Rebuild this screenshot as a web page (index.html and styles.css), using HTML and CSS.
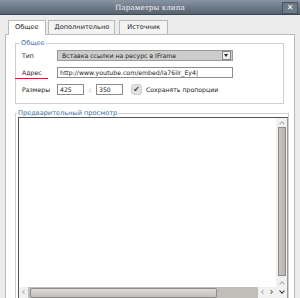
FILE: index.html
```html
<!DOCTYPE html>
<html lang="ru">
<head>
    <meta charset="UTF-8">
    <title>Параметры клипа</title>
    <link rel="stylesheet" href="styles.css">
</head>
<body>
    <div class="dialog">
        <div class="titlebar">
            <span class="title">Параметры клипа</span>
            <span class="close">&#10005;</span>
        </div>
        <div class="tabs">
            <div class="tab active">Общее</div>
            <div class="tab">Дополнительно</div>
            <div class="tab">Источник</div>
        </div>
        <div class="panel">
            <fieldset class="group">
                <legend>Общее</legend>
                <div class="row">
                    <label>Тип</label>
                    <div class="select">
                        <span>Вставка ссылки на ресурс в IFrame</span>
                        <span class="arrow"></span>
                    </div>
                </div>
                <div class="row">
                    <label><span class="marked">Адрес</span></label>
                    <div class="input wide">http://www.youtube.com/embed/la76iIr_Ey4|</div>
                </div>
                <div class="row">
                    <label>Размеры</label>
                    <div class="input small">425</div>
                    <span class="sep">:</span>
                    <div class="input small">350</div>
                    <span class="check">&#10004;</span>
                    <span class="keep">Сохранять пропорции</span>
                </div>
            </fieldset>
            <fieldset class="group preview">
                <legend>Предварительный просмотр</legend>
                <div class="frame">
                    <div class="view"></div>
                    <div class="vscroll">
                        <span class="btn up"></span>
                        <span class="vthumb"></span>
                        <span class="btn up"></span>
                        <span class="btn down"></span>
                    </div>
                    <div class="hscroll">
                        <span class="btn">&lsaquo;</span>
                        <span class="hthumb"></span>
                        <span class="btn">&lsaquo;</span>
                        <span class="btn">&rsaquo;</span>
                    </div>
                </div>
            </fieldset>
        </div>
    </div>
</body>
</html>
```

FILE: styles.css
```css
body {
    margin: 0;
    font-family: "DejaVu Sans", sans-serif;
    font-size: 6.2px;
    color: #222;
    background: #e4e4e4;
}
.dialog {
    width: 300px;
    height: 298px;
    overflow: hidden;
    background: #ececec;
    display: flex;
    flex-direction: column;
}
.titlebar {
    height: 14px;
    flex: none;
    background: linear-gradient(#8794a3, #56626f);
    border-bottom: 1px solid #3e4752;
    display: flex;
    align-items: center;
    justify-content: center;
    position: relative;
}
.title {
    font-family: "DejaVu Serif", serif;
    font-size: 7.3px;
    color: #eef2f6;
}
.close {
    position: absolute;
    right: 2px;
    top: 2px;
    width: 14px;
    height: 10px;
    background: #6d7a88;
    border: 1px solid #4a5561;
    color: #fff;
    font-size: 8px;
    line-height: 10px;
    text-align: center;
    font-weight: bold;
}
.tabs {
    display: flex;
    padding: 5px 0 0 8px;
    gap: 2px;
    font-size: 6.6px;
}
.tab {
    height: 13px;
    line-height: 13px;
    padding: 0 6px;
    background: #f3f3f3;
    border: 1px solid #b9b9b9;
    border-bottom: none;
}
.tab:nth-child(2) {
    padding: 0 5px 0 6px;
}
.tab:nth-child(3) {
    margin-left: 2px;
    padding: 0 7px;
}
.tab.active {
    background: #fff;
    margin-bottom: -1px;
    height: 14px;
    position: relative;
}
.panel {
    flex: 1;
    margin: 0 5px;
    background: #fff;
    border: 1px solid #b9b9b9;
    border-bottom: none;
    padding: 4px 4px 0 9px;
}
.group {
    margin: 0;
    padding: 3px 0 2px 6px;
    border: 1px solid #cfcfcf;
    width: 269px;
    box-sizing: border-box;
}
.group legend {
    color: #3f6d9c;
    padding: 0 1px;
    margin-left: -2px;
    font-size: 6.6px;
}
.row {
    display: flex;
    align-items: center;
    height: 11px;
    margin-bottom: 6px;
}
.row label {
    width: 35px;
    flex: none;
}
.marked {
    position: relative;
}
.marked::after {
    content: "";
    position: absolute;
    left: -7px;
    right: -6px;
    bottom: -3px;
    border-bottom: 1px solid #c8202a;
}
.select {
    width: 176px;
    height: 11px;
    box-sizing: border-box;
    background: #cfcdcb;
    border: 1px solid #9a9a9a;
    padding-left: 4px;
    display: flex;
    align-items: center;
    justify-content: space-between;
}
.arrow {
    width: 7px;
    height: 7px;
    margin-right: 1px;
    background: #eee;
    border: 1px solid #888;
    position: relative;
}
.arrow::after {
    content: "";
    position: absolute;
    left: 1px;
    top: 2px;
    border-left: 2.5px solid transparent;
    border-right: 2.5px solid transparent;
    border-top: 3px solid #222;
}
.input {
    height: 11px;
    line-height: 10px;
    box-sizing: border-box;
    border: 1px solid #8c8c8c;
    background: #fff;
    padding-left: 2px;
}
.wide {
    width: 176px;
}
.small {
    width: 27px;
}
.sep {
    width: 12px;
    text-align: center;
}
.check {
    width: 11px;
    height: 11px;
    margin-left: 8px;
    border-radius: 3px;
    background: #e2e2e2;
    border: 1px solid #cfcfcf;
    box-sizing: border-box;
    color: #444;
    font-size: 8px;
    line-height: 10px;
    text-align: center;
}
.keep {
    margin-left: 4px;
}
.preview {
    margin-top: 5px;
    height: 200px;
    padding: 0 0 0 3px;
}
.frame {
    width: 268px;
    border: 1px solid #555;
    border-right-color: #999;
    display: grid;
    grid-template-columns: 1fr 11px;
    grid-template-rows: 169px 11px;
    margin-left: -1px;
}
.view {
    background: #fff;
}
.vscroll {
    background: #f1f1f1;
    display: flex;
    flex-direction: column;
    align-items: center;
    grid-row: 1 / 3;
}
.vscroll .btn {
    height: 9px;
    width: 9px;
    display: flex;
    align-items: center;
    justify-content: center;
}
.vscroll .btn::before {
    content: "";
    width: 3px;
    height: 3px;
    border-top: 1px solid #aaa;
    border-left: 1px solid #aaa;
}
.vscroll .up::before {
    transform: translateY(1px) rotate(45deg);
}
.vscroll .down::before {
    border-color: #333;
    transform: translateY(-1px) rotate(225deg);
}
.vscroll .down {
    margin-bottom: 2px;
}
.vthumb {
    width: 8px;
    flex: 1;
    background: linear-gradient(90deg, #c9c6c2, #b8b5b1);
    border: 1px solid #8e8c8a;
    box-sizing: border-box;
    margin-bottom: 2px;
}
.hscroll {
    background: #c2bfbb;
    display: flex;
    align-items: center;
    grid-row: 2;
    grid-column: 1;
}
.hscroll .btn {
    width: 9px;
    height: 11px;
    text-align: center;
    font-size: 10px;
    line-height: 10px;
    color: #999;
    background: #f1f1f1;
}
.hscroll .btn:last-child {
    color: #333;
}
.hthumb {
    width: 185px;
    height: 8px;
    margin: 0 2px;
    background: linear-gradient(#dedcda, #c2bfbc);
    border: 1px solid #8e8c8a;
    border-radius: 2px;
    margin-right: auto;
}
```
